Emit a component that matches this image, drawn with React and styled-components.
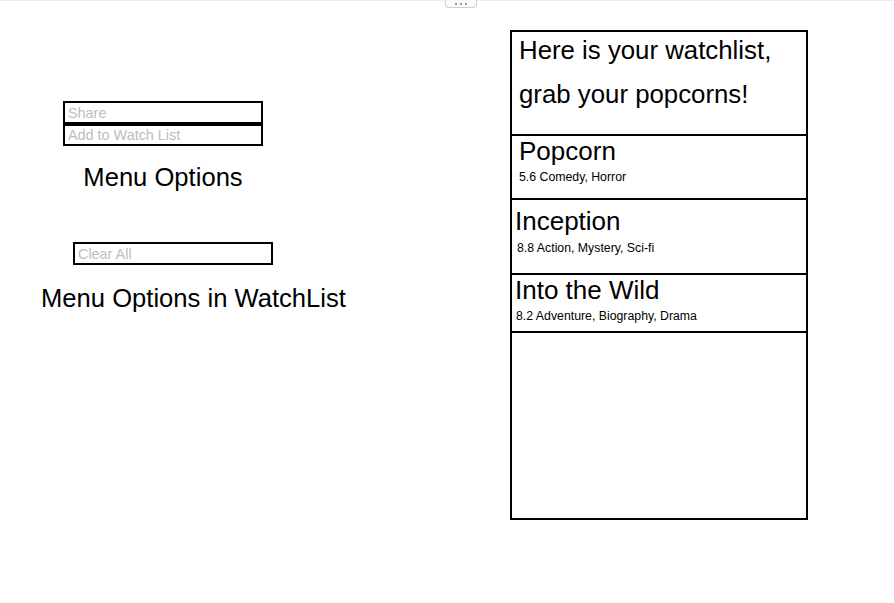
import React from "react";
import styled, { createGlobalStyle } from "styled-components";

const GlobalStyle = createGlobalStyle`
  body {
    margin: 0;
    background: #ffffff;
    font-family: "Liberation Sans", Arial, sans-serif;
    color: #000;
  }
`;

const watchlist = [
  { title: "Popcorn", rating: "5.6", genres: "Comedy, Horror", top: 1, bottom: 14, gap: 5, titleIndent: 7, metaIndent: 7 },
  { title: "Inception", rating: "8.8", genres: "Action, Mystery, Sci-fi", top: 7, bottom: 18, gap: 6, titleIndent: 3, metaIndent: 5 },
  { title: "Into the Wild", rating: "8.2", genres: "Adventure, Biography, Drama", top: 1, bottom: 8, gap: 5, titleIndent: 3, metaIndent: 4 },
];

export default function App() {
  return (
    <>
      <GlobalStyle />
      <Page>
        <HandleTab>
          <Dot />
          <Dot />
          <Dot />
        </HandleTab>

        <LeftColumn>
          <MenuGroup>
            <OptionInput placeholder="Share" />
            <OptionInput placeholder="Add to Watch List" $height={22} />
            <MenuTitle $align="center" $gap={16}>Menu Options</MenuTitle>
          </MenuGroup>

          <WatchListGroup>
            <ClearInput placeholder="Clear All" />
            <MenuTitle $gap={18}>Menu Options in WatchList</MenuTitle>
          </WatchListGroup>
        </LeftColumn>

        <Panel>
          <PanelHeader>
            <HeaderLine>Here is your watchlist,</HeaderLine>
            <HeaderLine>grab your popcorns!</HeaderLine>
          </PanelHeader>
          {watchlist.map((movie) => (
            <MovieRow key={movie.title} $top={movie.top} $bottom={movie.bottom} $gap={movie.gap}>
              <MovieTitle $indent={movie.titleIndent}>{movie.title}</MovieTitle>
              <MovieMeta $indent={movie.metaIndent}>
                {movie.rating} {movie.genres}
              </MovieMeta>
            </MovieRow>
          ))}
          <EmptySpace />
        </Panel>
      </Page>
    </>
  );
}

const Page = styled.div`
  position: relative;
  display: flex;
  align-items: flex-start;
  min-height: 603px;
  border-top: 1px solid #ececec;
  box-sizing: border-box;
`;

const HandleTab = styled.div`
  position: absolute;
  top: -1px;
  left: 445px;
  width: 32px;
  height: 8px;
  box-sizing: border-box;
  border: 1px solid #cfcfcf;
  border-top: none;
  border-radius: 0 0 4px 4px;
  background: #fafafa;
  display: flex;
  align-items: center;
  justify-content: center;
  gap: 3px;
`;

const Dot = styled.span`
  width: 2px;
  height: 2px;
  background: #8a9bb0;
`;

const LeftColumn = styled.div`
  width: 510px;
  padding-top: 100px;
  display: flex;
  flex-direction: column;
`;

const MenuGroup = styled.div`
  margin-left: 63px;
  width: 200px;
  display: flex;
  flex-direction: column;
`;

const OptionInput = styled.input`
  box-sizing: border-box;
  width: 200px;
  height: ${(p) => p.$height || 23}px;
  margin: 0;
  padding: 0 3px;
  border: 2px solid #000;
  font-family: "Liberation Sans", Arial, sans-serif;
  font-size: 14.4px;
  outline: none;
  &::placeholder {
    color: #bdbdbd;
  }
`;

const ClearInput = styled(OptionInput)`
  margin-left: 32px;
`;

const MenuTitle = styled.h2`
  margin: ${(p) => p.$gap}px 0 0;
  font-size: 25.6px;
  line-height: 30px;
  font-weight: normal;
  text-align: ${(p) => p.$align || "left"};
  white-space: nowrap;
`;

const WatchListGroup = styled.div`
  margin-top: 50px;
  margin-left: 41px;
  display: flex;
  flex-direction: column;
  align-items: flex-start;
`;

const Panel = styled.div`
  margin-top: 29px;
  width: 298px;
  height: 490px;
  box-sizing: border-box;
  border: 2px solid #000;
  display: flex;
  flex-direction: column;
`;

const PanelHeader = styled.div`
  padding: 0 0 22px 7px;
  border-bottom: 2px solid #000;
  display: flex;
  flex-direction: column;
  gap: 8px;
`;

const HeaderLine = styled.p`
  margin: 0;
  font-size: 25.8px;
  line-height: 36px;
`;

const MovieRow = styled.div`
  padding-top: ${(p) => p.$top}px;
  padding-bottom: ${(p) => p.$bottom}px;
  border-bottom: 2px solid #000;
  display: flex;
  flex-direction: column;
  gap: ${(p) => p.$gap}px;
`;

const MovieTitle = styled.div`
  padding-left: ${(p) => p.$indent}px;
  font-size: 26px;
  line-height: 28px;
`;

const MovieMeta = styled.div`
  padding-left: ${(p) => p.$indent}px;
  font-size: 12.3px;
  line-height: 14px;
`;

const EmptySpace = styled.div`
  flex: 1;
`;
